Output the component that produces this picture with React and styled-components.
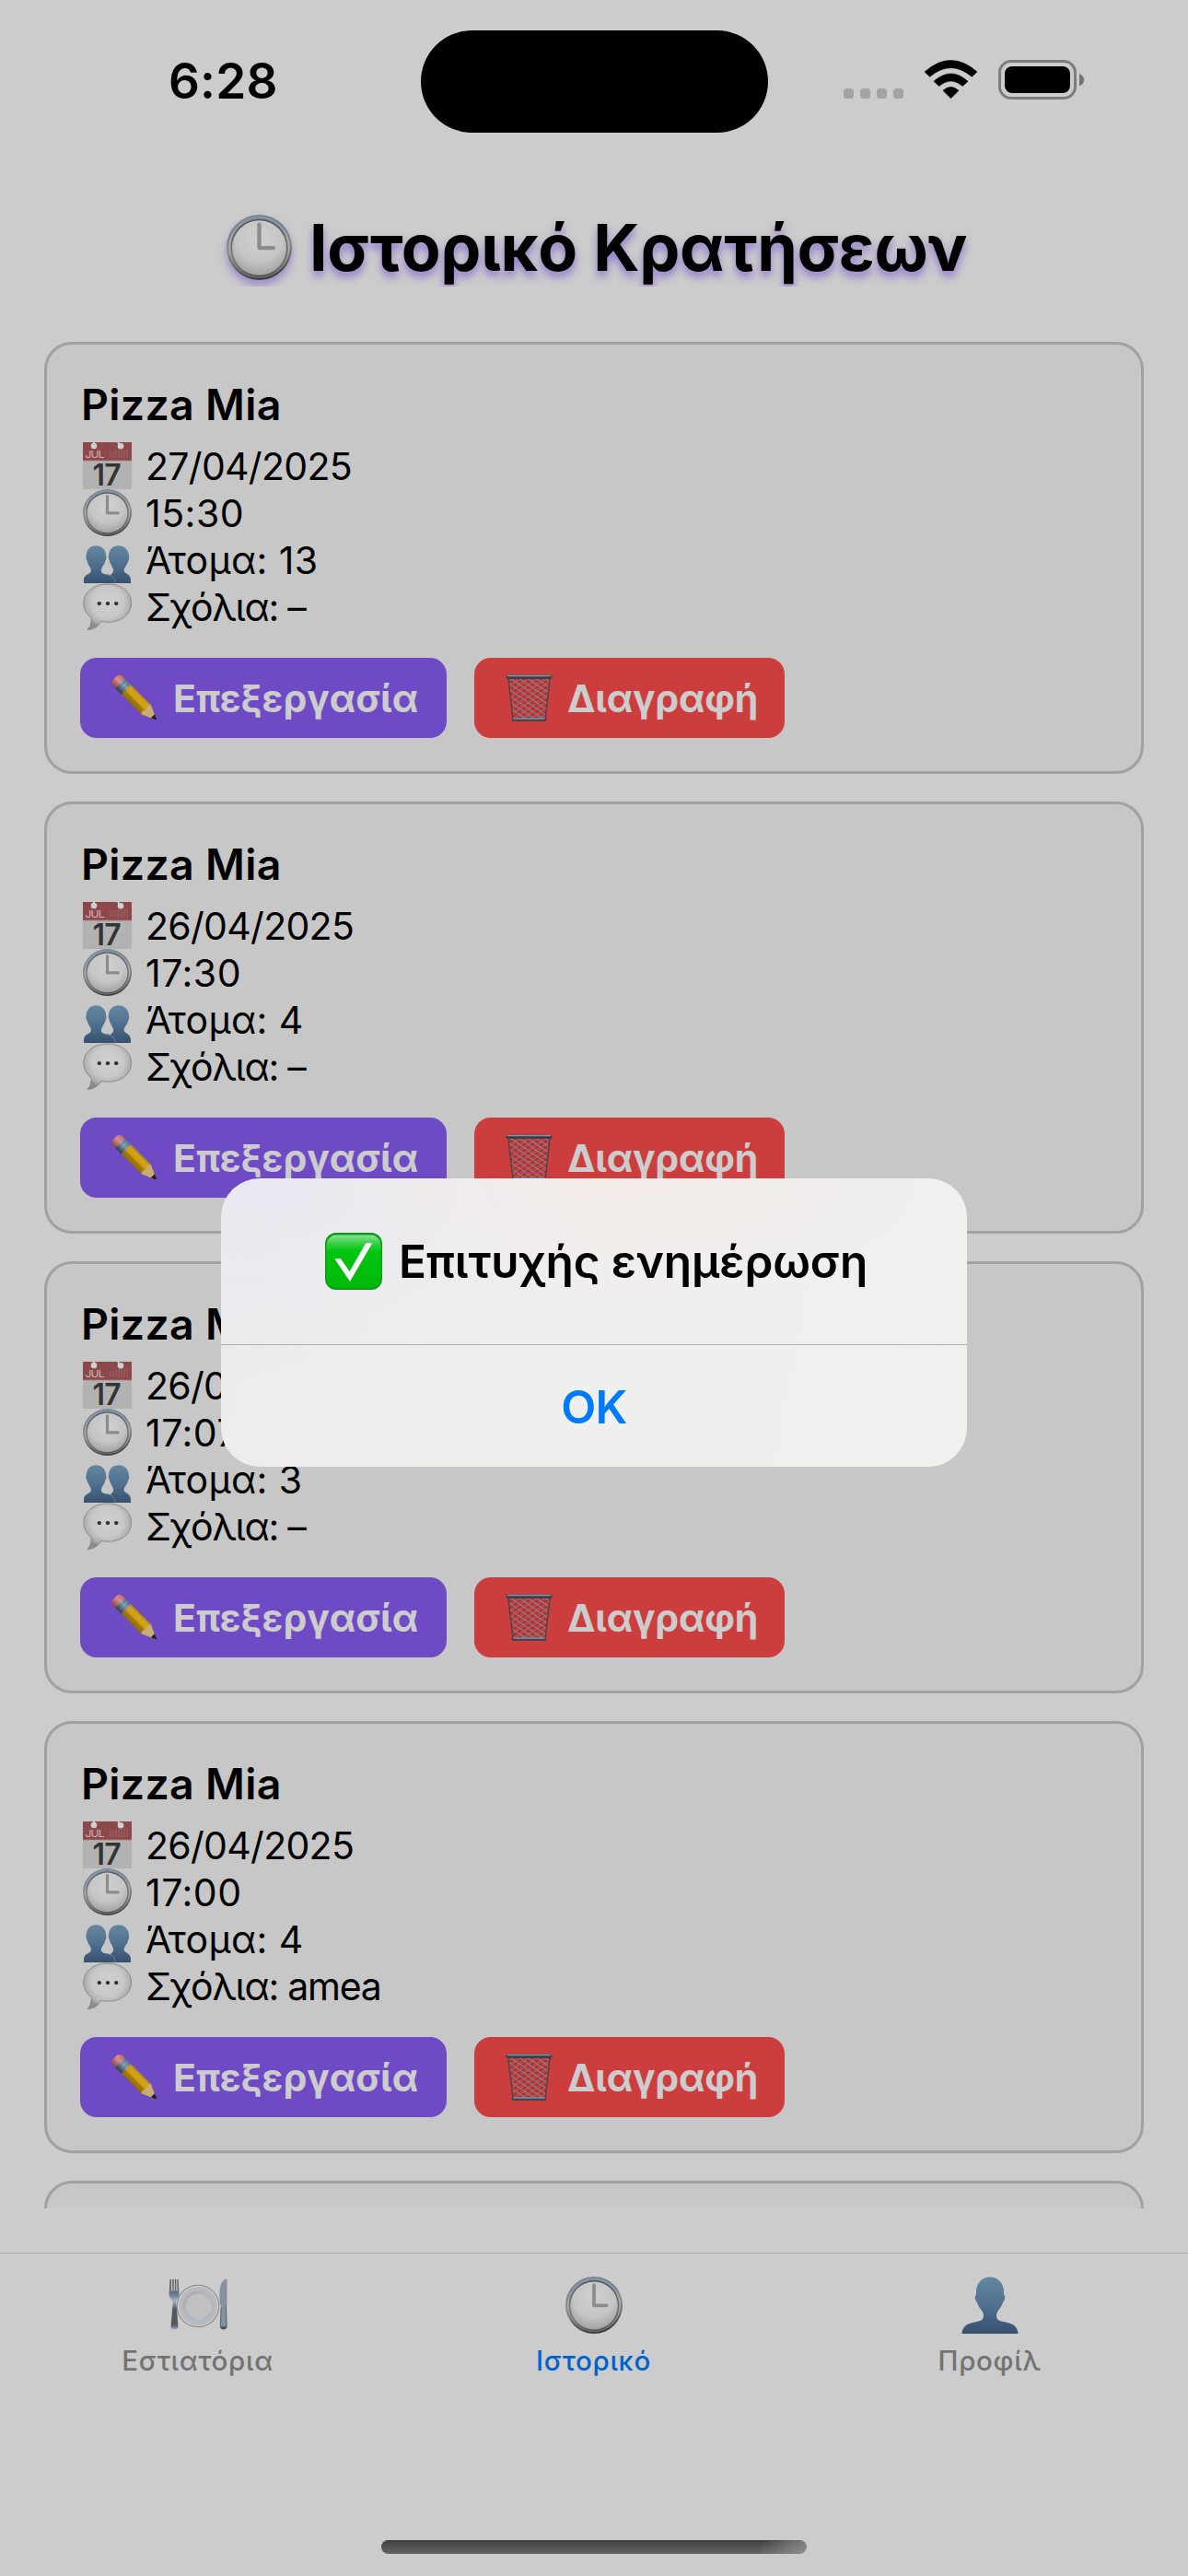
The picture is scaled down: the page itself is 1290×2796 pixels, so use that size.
import React from "react";
import styled, { createGlobalStyle, css } from "styled-components";

const GlobalStyle = createGlobalStyle`
  * { box-sizing: border-box; }
  html, body { margin: 0; padding: 0; background: #cccccc; }
  body { width: 1290px; height: 2796px; overflow: hidden; }
`;

const Screen = styled.div`
  position: relative;
  display: flex;
  flex-direction: column;
  width: 1290px;
  height: 2796px;
  overflow: hidden;
  background: #cccccc;
  color: #000;
  font-family: Inter, "Noto Sans", sans-serif;
`;

const Defs = styled.svg`
  position: absolute;
  width: 0;
  height: 0;
`;

const Glyph = styled.svg`
  display: block;
  flex: none;
  overflow: visible;
  width: ${(p) => p.$size}px;
  height: ${(p) => p.$height || p.$size}px;
  ${(p) => p.$shadow && css`filter: drop-shadow(0 6px 5px rgba(108, 73, 197, 0.5));`}
`;

/* ---------- status bar ---------- */

const StatusBar = styled.div`
  display: grid;
  grid-template-columns: 457px 377px 456px;
  height: 180px;
  padding-top: 33px;
  flex: none;
`;

const Time = styled.div`
  padding-left: 183px;
  line-height: 111px;
  font-size: 53px;
  font-weight: 600;
  letter-spacing: 0.2px;
`;

const Island = styled.div`
  height: 111px;
  border-radius: 56px;
  background: #000;
`;

const StatusIcons = styled.div`
  padding: 27px 0 0 82px;
`;

const StatusSvg = styled.svg`
  display: block;
  width: 270px;
  height: 60px;
`;

/* ---------- heading ---------- */

const Heading = styled.h1`
  display: flex;
  align-items: center;
  height: 86px;
  margin: 45px 0 60px;
  padding-left: 246px;
  gap: 19px;
  flex: none;
  clip-path: inset(0);
`;

const HeadingText = styled.span`
  padding-top: 1px;
  font-size: 70px;
  line-height: 85px;
  font-weight: 700;
  letter-spacing: -0.3px;
  word-spacing: 1px;
  white-space: nowrap;
  text-shadow: 0 6px 10px rgba(96, 55, 205, 0.55);
`;

/* ---------- list ---------- */

const List = styled.main`
  display: flex;
  flex-direction: column;
  gap: 30px;
  height: 2026px;
  padding: 0 48px;
  overflow: hidden;
  flex: none;
`;

const Card = styled.article`
  flex: none;
  height: 469px;
  padding: 36px;
  border: 3px solid #a1a1a1;
  border-radius: 30px;
  background: #c7c7c7;
`;

const Name = styled.h2`
  margin: 0 0 12px;
  padding-left: 1px;
  height: 58px;
  font-size: 46.5px;
  line-height: 58px;
  font-weight: 600;
  letter-spacing: 0.3px;
`;

const Row = styled.div`
  display: flex;
  align-items: center;
  gap: 15px;
  height: 51px;
  padding-left: 3px;
  font-size: 41px;
  line-height: 51px;
  letter-spacing: ${(p) => p.$tracking}px;
  white-space: nowrap;
`;

const RowText = styled.span`
  padding-top: 2px;
`;

const Actions = styled.div`
  display: flex;
  gap: 30px;
  margin-top: 30px;
`;

const Action = styled.button`
  display: flex;
  align-items: center;
  gap: 16px;
  width: ${(p) => (p.$danger ? 337 : 398)}px;
  height: 87px;
  padding: 0 0 0 34px;
  border: 0;
  border-radius: 18px;
  background: ${(p) => (p.$danger ? "#cc3d3d" : "#6e4ac4")};
  color: #cccccc;
  font-family: inherit;
  font-size: 41px;
  font-weight: 700;
  letter-spacing: ${(p) => (p.$danger ? -0.2 : 0)}px;
  white-space: nowrap;
`;

/* ---------- tab bar ---------- */

const TabBar = styled.nav`
  display: grid;
  grid-template-columns: repeat(3, 1fr);
  height: 312px;
  margin-top: 48px;
  border-top: 1px solid #ababab;
  flex: none;
`;

const Tab = styled.div`
  display: flex;
  flex-direction: column;
  align-items: center;
  gap: 11px;
  padding: 25px 1px 0 0;
  color: ${(p) => (p.$active ? "#0062cc" : "#737373")};
  font-size: 29.5px;
  line-height: 36px;
  font-weight: 500;
  letter-spacing: 0.7px;
`;

const TabIcon = styled.div`
  display: flex;
  align-items: center;
  justify-content: center;
  height: 62px;
`;

const HomeIndicator = styled.div`
  width: 462px;
  height: 15px;
  margin: 0 auto;
  border-radius: 8px;
  background:
    linear-gradient(120deg, transparent 88%, rgba(160, 160, 160, 0.75) 100%),
    linear-gradient(#404040, #626262);
`;

/* ---------- alert ---------- */

const Alert = styled.section`
  position: absolute;
  left: 240px;
  top: 1279px;
  width: 810px;
  height: 313px;
  border-radius: 42px;
  overflow: hidden;
  background:
    radial-gradient(ellipse 340px 130px at 430px 0, #f3ebe8 0%, rgba(243, 235, 232, 0) 100%),
    radial-gradient(ellipse 380px 220px at 40px 0, #e9e8f1 0%, rgba(233, 232, 241, 0) 100%),
    linear-gradient(100deg, #ececec 0%, #efefee 45%, #f0f0ef 100%);
`;

const AlertTitle = styled.div`
  display: flex;
  align-items: center;
  gap: 18px;
  height: 180px;
  padding-left: 113px;
  font-size: 49.5px;
  font-weight: 600;
  letter-spacing: -0.12px;
  white-space: nowrap;
`;

const AlertButton = styled.button`
  display: block;
  width: 100%;
  height: 133px;
  border: 0;
  border-top: 1px solid #adadad;
  background: transparent;
  color: #007aff;
  padding: 1px 0 0;
  font-family: inherit;
  font-size: 49.5px;
  font-weight: 600;
  letter-spacing: -0.6px;
`;

/* ---------- drawings ---------- */

const SharedDefs = () => (
  <Defs aria-hidden="true">
    <defs>
      <linearGradient id="rim" x1="0.3" y1="0" x2="0.5" y2="1">
        <stop offset="0" stopColor="#7d8999" />
        <stop offset="0.3" stopColor="#75808d" />
        <stop offset="0.5" stopColor="#8e8c8a" />
        <stop offset="0.75" stopColor="#686868" />
        <stop offset="1" stopColor="#3a3a3a" />
      </linearGradient>
      <linearGradient id="rimInner" x1="0" y1="0" x2="0" y2="1">
        <stop offset="0" stopColor="#8793a1" />
        <stop offset="0.5" stopColor="#b3afab" />
        <stop offset="1" stopColor="#6a6a6a" />
      </linearGradient>
      <linearGradient id="rimEdge" x1="0" y1="0" x2="0" y2="1">
        <stop offset="0" stopColor="#474d54" />
        <stop offset="0.6" stopColor="#6c6c6c" />
        <stop offset="1" stopColor="#8c8c8c" />
      </linearGradient>
      <radialGradient id="face" cx="0.5" cy="0.32" r="0.72">
        <stop offset="0" stopColor="#d0d0d0" />
        <stop offset="0.6" stopColor="#c5c5c5" />
        <stop offset="1" stopColor="#9e9e9e" />
      </radialGradient>
      <linearGradient id="bust" x1="0" y1="0" x2="0" y2="1">
        <stop offset="0" stopColor="#65869f" />
        <stop offset="0.5" stopColor="#50708f" />
        <stop offset="1" stopColor="#37506e" />
      </linearGradient>
      <radialGradient id="bubble" cx="0.5" cy="0.4" r="0.56">
        <stop offset="0" stopColor="#d0d0d0" />
        <stop offset="0.6" stopColor="#c8c8c8" />
        <stop offset="0.85" stopColor="#b0b0b0" />
        <stop offset="1" stopColor="#8c8c8c" />
      </radialGradient>
      <linearGradient id="wood" x1="0" y1="0" x2="0" y2="1">
        <stop offset="0" stopColor="#b08a18" />
        <stop offset="0.25" stopColor="#d4a51c" />
        <stop offset="0.6" stopColor="#c99a0a" />
        <stop offset="0.62" stopColor="#a67c08" />
        <stop offset="1" stopColor="#8c6a12" />
      </linearGradient>
      <linearGradient id="rubber" x1="0" y1="0" x2="0" y2="1">
        <stop offset="0" stopColor="#c06a6a" />
        <stop offset="0.4" stopColor="#dc8f8f" />
        <stop offset="1" stopColor="#8d4444" />
      </linearGradient>
      <linearGradient id="ferrule" x1="0" y1="0" x2="0" y2="1">
        <stop offset="0" stopColor="#5e7890" />
        <stop offset="0.4" stopColor="#8aa3b8" />
        <stop offset="1" stopColor="#343c44" />
      </linearGradient>
      <linearGradient id="check" x1="0" y1="0" x2="0" y2="1">
        <stop offset="0" stopColor="#8be394" />
        <stop offset="0.16" stopColor="#35cf42" />
        <stop offset="0.3" stopColor="#03c612" />
        <stop offset="1" stopColor="#00b808" />
      </linearGradient>
      <linearGradient id="steel" x1="0" y1="0" x2="0" y2="1">
        <stop offset="0" stopColor="#5b5f65" />
        <stop offset="0.3" stopColor="#6b7784" />
        <stop offset="0.42" stopColor="#9db2c8" />
        <stop offset="0.6" stopColor="#54585d" />
        <stop offset="0.9" stopColor="#55585c" />
        <stop offset="1" stopColor="#93a9c0" />
      </linearGradient>
      <linearGradient id="plate" x1="0" y1="0" x2="1" y2="1">
        <stop offset="0" stopColor="#a9a9a9" />
        <stop offset="1" stopColor="#cacaca" />
      </linearGradient>
      <clipPath id="bin">
        <path d="M3 5 L49 5 L44 49 L8 49 Z" />
      </clipPath>
    </defs>
  </Defs>
);

const Clock = ({ size, height, shadow }) => (
  <Glyph $size={size} $height={height} $shadow={shadow} viewBox="0 0 64 64" preserveAspectRatio="none">
    <circle cx="32" cy="32" r="32" fill="url(#rim)" />
    <circle cx="32" cy="32" r="29.2" fill="none" stroke="url(#rimInner)" strokeWidth="1.6" />
    <circle cx="32" cy="32" r="27.6" fill="url(#rimEdge)" />
    <circle cx="32" cy="32.3" r="26.6" fill="url(#face)" />
    <path d="M32 9.500V32.500H46" fill="none" stroke="#8b8d8d" strokeWidth="3.900" strokeLinecap="round" strokeLinejoin="round" />
  </Glyph>
);

const Calendar = ({ size, height }) => (
  <Glyph $size={size} $height={height} viewBox="0 0 53 51">
    <rect x="0" y="0" width="53" height="51" fill="#b2b2b2" />
    <rect x="0" y="0" width="53" height="20" fill="#8d484a" />
    <path d="M0 20H53" stroke="#a98284" strokeWidth="0.8" />
    <circle cx="12" cy="4" r="3.300" fill="#cfcfcf" />
    <circle cx="41" cy="4.200" r="3.300" fill="#cfcfcf" />
    <path d="M12 0V5M38 0L41 4" stroke="#cfcfcf" strokeWidth="2" />
    <text x="2.400" y="16.800" fontSize="11" fill="#c9b5b5" fontFamily="Inter, sans-serif" textLength="20.500" lengthAdjust="spacingAndGlyphs">JUL</text>
    <path d="M30 10V17M33 10V17M36 9V17M39 8.500V17M42 8.500V17M45 8V17M48 8V17" stroke="#a8777a" strokeWidth="0.900" strokeDasharray="1.600 0.700" />
    <text x="10.500" y="46.500" fontSize="32" fontWeight="600" fill="#343434" fontFamily="Inter, sans-serif" textLength="30.500" lengthAdjust="spacingAndGlyphs">17</text>
  </Glyph>
);

const People = ({ size, height }) => (
  <Glyph $size={size} $height={height} viewBox="0 0 52 52" preserveAspectRatio="none">
    <path
      d="M38 10.500C44 10.500 49 15 49 22C49.800 24 49 26 48.200 27.500C47.500 32 43.500 34.500 43.800 38C44 42 51 41 51 48.500V52H25C25.500 44 32.500 42 32.500 38C32.500 34.500 29 31 28.300 27C27.300 25 27 23.500 27.500 21C28 14.500 32 10.500 38 10.500Z"
      fill="url(#bust)"
    />
    <path
      d="M14 10.500C20 10.500 24.700 15 24.700 22C25.300 24 24.800 26 23.800 27.500C23 32 19.500 34.500 19.500 38.500C19.800 42 25 42 29.500 43C33 44 34.500 48 34.500 52H1V48C1.500 41.500 8.700 42.500 8.700 38C8.700 34.500 5.500 32 4.500 27.500C3.500 26 3 24 3.500 21.500C4 14.500 8.500 10.500 14 10.500Z"
      fill="url(#bust)"
    />
    <path d="M24 42.300C31 43 34 46 34.500 51" fill="none" stroke="#6d93b0" strokeWidth="0.800" />
  </Glyph>
);

const Person = ({ size }) => (
  <Glyph $size={size} viewBox="0 0 62 62">
    <path
      d="M31 0.500C40 0.500 46 7.500 46 16.500V19.500C48 21 47.500 26 45 28C43.500 34 38 37.500 38 42C38 47.500 41 48 48 49.500C56 51 61 54 61.500 62H0.500C1 54 6 51 14 49.500C21 48 24 47.500 24 42C24 37.500 18.500 34 17 28C14.500 26 14 21 16 19.500V16.500C16 7.500 22 0.500 31 0.500Z"
      fill="url(#bust)"
    />
  </Glyph>
);

const Bubble = ({ size, height }) => (
  <Glyph $size={size} $height={height} viewBox="0 0 52 52" preserveAspectRatio="none">
    <path
      d="M26.500 1C41 1 51.500 9.500 51.500 22C51.500 34.500 41 43 27 43C25 43 21.500 42.600 19.500 42.200C17 47 12 51 5 51.500C8 48 9.500 43 9 38.500C4 34.500 0.800 29 0.800 22C0.800 9.500 12 1 26.500 1Z"
      fill="url(#bubble)"
      stroke="#848484"
      strokeWidth="0.900"
    />
    <circle cx="17.500" cy="22.500" r="2.200" fill="#303030" />
    <circle cx="26.500" cy="22.500" r="2.200" fill="#303030" />
    <circle cx="35.500" cy="22.500" r="2.200" fill="#303030" />
  </Glyph>
);

const Pencil = ({ size }) => (
  <Glyph $size={size} viewBox="0 0 52 52">
    <g transform="translate(6.500 7) rotate(45)">
      <rect x="-4" y="-7.500" width="12" height="15" rx="4.500" fill="url(#rubber)" />
      <rect x="4" y="-7.500" width="10" height="15" fill="url(#ferrule)" />
      <path d="M7 -7.500V7.500M11 -7.500V7.500" stroke="#2e3740" strokeWidth="0.700" opacity="0.500" />
      <path d="M14 -7.500H45L47 -4L45.500 0L47 4L45 7.500H14Z" fill="url(#wood)" />
      <path d="M45 -7.500L60.500 -0.600V0.600L45 7.500L43.500 4L45 0L43.500 -4Z" fill="#c9ab74" />
      <path d="M55.500 -2.900L61 -0.600V0.600L55.500 2.900Z" fill="#1f1f1f" />
    </g>
  </Glyph>
);

const meshLines = Array.from({ length: 14 }, (_, i) => i * 9.5 - 44);

const Bin = ({ size }) => (
  <Glyph $size={size} viewBox="0 0 52 52">
    <g clipPath="url(#bin)" fill="none" strokeWidth="1.200">
      {meshLines.map((x) => (
        <path key={`l${x}`} d={`M${x + 48} 3L${x - 18} 49`} stroke="#5f434b" />
      ))}
      {meshLines.map((x) => (
        <path key={`r${x}`} d={`M${x} 3L${x + 66} 49`} stroke="#8d8088" />
      ))}
    </g>
    <path d="M3 5L8 49M49 5L44 49" stroke="#4d4248" strokeWidth="1.400" fill="none" />
    <rect x="0.500" y="0.500" width="51" height="4.600" rx="2" fill="#3c3f45" />
    <path d="M2.500 1.600H49.500" stroke="#8296a8" strokeWidth="1.500" strokeLinecap="round" />
    <rect x="7" y="48" width="38" height="3.800" rx="1.600" fill="#3d4046" />
    <path d="M9 49H43" stroke="#7f99b4" strokeWidth="1.500" strokeLinecap="round" />
  </Glyph>
);

const Dining = ({ size }) => (
  <Glyph $size={size} viewBox="0 0 64 64">
    <g transform="translate(0 -1.500)">
      <circle cx="32" cy="34.500" r="23.300" fill="#7f868d" />
      <circle cx="32" cy="34.500" r="22.300" fill="#cfcfcf" />
      <circle cx="32" cy="34.500" r="21" fill="#bababa" />
      <circle cx="32" cy="34.500" r="16" fill="url(#plate)" stroke="#a3adb9" strokeWidth="0.800" />
      <circle cx="32" cy="34.500" r="13" fill="#c1c1c1" />
      <path d="M19.500 42.500Q32 58.500 44.500 42.500" fill="none" stroke="#a5b8cd" strokeWidth="1.800" />
      <path
        d="M1.500 5.500H3V18H4.200V5.500H5.700V18H6.800V5.500H8.300V18H9.400V5.500H10.700L11.500 22C11.500 26 8.700 27.500 8.300 30L10.500 57C10.500 61 2.500 61 2.500 57L4.800 30C4.500 27.500 0.500 26 0.500 22Z"
        fill="url(#steel)"
      />
      <path d="M62 5.500C57 7 55.500 14 55.500 22V32C57 33.500 57 34 57 36L56 57C56 61 63.500 61 63.500 57L62.800 34C63.500 33 63.500 32 63.500 31V5.500Z" fill="#8391a0" />
      <path d="M57.200 36L56.300 57C56.500 60 63 60 63 57L62.500 34" fill="none" stroke="#56606a" strokeWidth="1" />
      <path d="M56.300 57Q59.500 62 63.200 57Z" fill="#454545" />
    </g>
  </Glyph>
);

const CheckMark = ({ size }) => (
  <Glyph $size={size} viewBox="0 0 62 62">
    <rect width="62" height="62" rx="12" fill="#0c9a17" />
    <rect x="1.400" y="2.600" width="59.200" height="57.600" rx="10.500" fill="url(#check)" />
    <path d="M17 28.200L26.600 42L43.500 12.500Q44.200 11.300 45.500 11.300H51.300L27 53L10.300 28.200Z" fill="#fff" />
  </Glyph>
);

const StatusGlyphs = () => (
  <StatusSvg viewBox="0 0 270 60">
    {[0, 18, 36, 54].map((x) => (
      <rect key={x} x={x} y="36" width="11" height="11" rx="3.500" fill="#a3a3a3" />
    ))}
    <g transform="translate(88 5)">
      <path d="M0 13Q28.500 -12 57 13L51.300 18.300Q28.500 -1 5.700 18.300Z" strokeLinejoin="round" stroke="#000" strokeWidth="0.600" />
      <path d="M10 23.300Q28.500 6.500 47 23.300L41.300 28.500Q28.500 17.500 15.700 28.500Z" stroke="#000" strokeWidth="0.600" />
      <path d="M20 33.300Q28.500 25.500 37 33.300L28.500 41.800Z" stroke="#000" strokeWidth="0.600" />
    </g>
    <rect x="169.500" y="6.500" width="82" height="40" rx="12.500" fill="none" stroke="#7d7d7d" strokeWidth="3" />
    <rect x="175" y="12" width="71" height="29" rx="8" />
    <path d="M256 20Q261 22 261 26.500Q261 31.500 256 33.500Z" fill="#737373" />
  </StatusSvg>
);

const bookings = [
  { date: "27/04/2025", time: "15:30", people: "13", notes: "–" },
  { date: "26/04/2025", time: "17:30", people: "4", notes: "–" },
  { date: "26/04/2025", time: "17:07", people: "3", notes: "–" },
  { date: "26/04/2025", time: "17:00", people: "4", notes: "amea" },
];

const Booking = ({ date, time, people, notes }) => (
  <Card>
    <Name>Pizza Mia</Name>
    <Row $tracking={-0.7}><Calendar size={53} height={51} /><RowText>{date}</RowText></Row>
    <Row $tracking={0.5}><Clock size={53} height={51} /><RowText>{time}</RowText></Row>
    <Row $tracking={0.4}><People size={53} height={51} /><RowText>Άτομα: {people}</RowText></Row>
    <Row $tracking={-1.25}><Bubble size={53} height={51} /><RowText>Σχόλια: {notes}</RowText></Row>
    <Actions>
      <Action><Pencil size={51} />Επεξεργασία</Action>
      <Action $danger><Bin size={51} />Διαγραφή</Action>
    </Actions>
  </Card>
);

export default function App() {
  return (
    <Screen>
      <GlobalStyle />
      <SharedDefs />
      <StatusBar>
        <Time>6:28</Time>
        <Island />
        <StatusIcons><StatusGlyphs /></StatusIcons>
      </StatusBar>
      <Heading>
        <Clock size={71} shadow />
        <HeadingText>Ιστορικό Κρατήσεων</HeadingText>
      </Heading>
      <List>
        {bookings.map((b) => (
          <Booking key={b.time} {...b} />
        ))}
        <Card />
      </List>
      <TabBar>
        <Tab><TabIcon><Dining size={64} /></TabIcon>Εστιατόρια</Tab>
        <Tab $active><TabIcon><Clock size={62} /></TabIcon>Ιστορικό</Tab>
        <Tab><TabIcon><Person size={62} /></TabIcon>Προφίλ</Tab>
      </TabBar>
      <HomeIndicator />
      <Alert>
        <AlertTitle><CheckMark size={62} />Επιτυχής ενημέρωση</AlertTitle>
        <AlertButton>OK</AlertButton>
      </Alert>
    </Screen>
  );
}
